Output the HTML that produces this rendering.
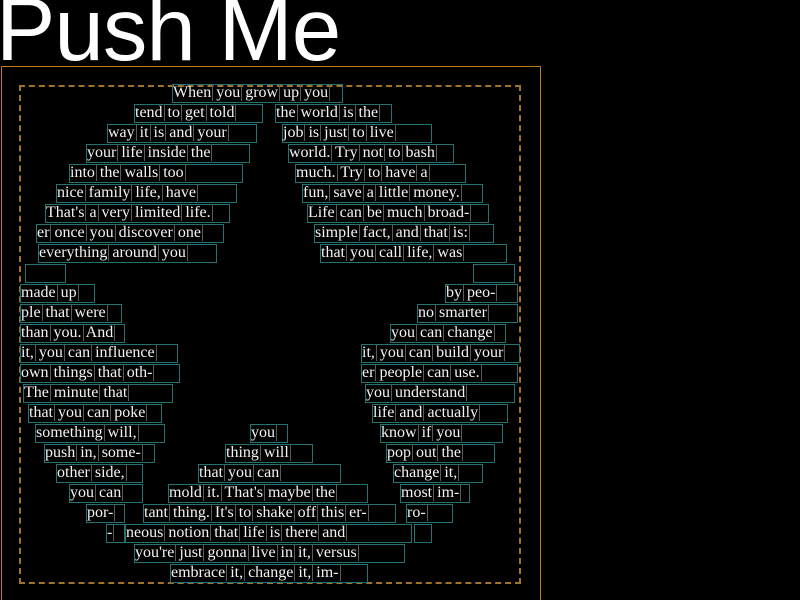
<!DOCTYPE html>
<html><head><meta charset="utf-8"><style>
html,body{margin:0;padding:0;background:#000;width:800px;height:600px;overflow:hidden;position:relative}
.t{position:absolute;left:-4px;top:-15px;font:89px "Liberation Sans",sans-serif;color:#fff;line-height:1;letter-spacing:-1px}
.frame{position:absolute;left:1px;top:66px;width:540px;height:540px;border:1.5px solid #c07d1a;box-sizing:border-box}
.dash{position:absolute;left:19px;top:85px;width:502px;height:499px;border:2px dashed #a0752a;box-sizing:border-box}
.r{position:absolute;height:19px;border:1.5px solid #237373;box-sizing:border-box;font:16px "Liberation Serif",serif;color:#f4f4f4;line-height:16px;white-space:nowrap;overflow:visible;word-spacing:-1px}
.r span{border-right:1px solid #5a5a5a;padding-right:1px}
</style></head><body>
<div class="t">Push Me</div>
<div class="frame"></div>
<div class="dash"></div>
<div id="c"></div>
<script>
var d=[
[0,172,171,"When you grow up you"],
[1,134,129,"tend to get told"],[1,275,117,"the world is the"],
[2,107,150,"way it is and your"],[2,282,150,"job is just to live"],
[3,86,164,"your life inside the"],[3,288,166,"world. Try not to bash"],
[4,69,174,"into the walls too"],[4,295,171,"much. Try to have a"],
[5,56,181,"nice family life, have"],[5,302,181,"fun, save a little money."],
[6,45,185,"That's a very limited life."],[6,307,182,"Life can be much broad-"],
[7,36,188,"er once you discover one"],[7,314,180,"simple fact, and that is:"],
[8,38,179,"everything around you"],[8,320,187,"that you call life, was"],
[9,25,41,""],[9,473,42,""],
[10,20,75,"made up"],[10,445,73,"by peo-"],
[11,20,102,"ple that were"],[11,417,101,"no smarter"],
[12,20,105,"than you. And"],[12,390,116,"you can change"],
[13,20,158,"it, you can influence"],[13,361,159,"it, you can build your"],
[14,20,160,"own things that oth-"],[14,361,157,"er people can use."],
[15,23,150,"The minute that"],[15,365,150,"you understand"],
[16,28,134,"that you can poke"],[16,372,136,"life and actually"],
[17,35,130,"something will,"],[17,250,38,"you"],[17,380,123,"know if you"],
[18,44,111,"push in, some-"],[18,225,88,"thing will"],[18,386,109,"pop out the"],
[19,56,87,"other side,"],[19,198,143,"that you can"],[19,393,90,"change it,"],
[20,69,74,"you can"],[20,168,200,"mold it. That's maybe the"],[20,400,70,"most im-"],
[21,86,39,"por-"],[21,143,253,"tant thing. It's to shake off this er-"],[21,406,47,"ro-"],
[22,106,19,"-"],[22,125,287,"neous notion that life is there and"],[22,414,18,""],
[23,134,271,"you're just gonna live in it, versus"],
[24,170,198,"embrace it, change it, im-"]
];
var h="";
d.forEach(function(a){
 var w=a[3].split(" ").map(function(x){return "<span>"+x+"</span>"}).join(" ");
 h+='<div class="r" style="top:'+(84+a[0]*20)+'px;left:'+a[1]+'px;width:'+a[2]+'px">'+(a[3]?w:"")+'</div>';
});
document.getElementById("c").innerHTML=h;
</script>
</body></html>
